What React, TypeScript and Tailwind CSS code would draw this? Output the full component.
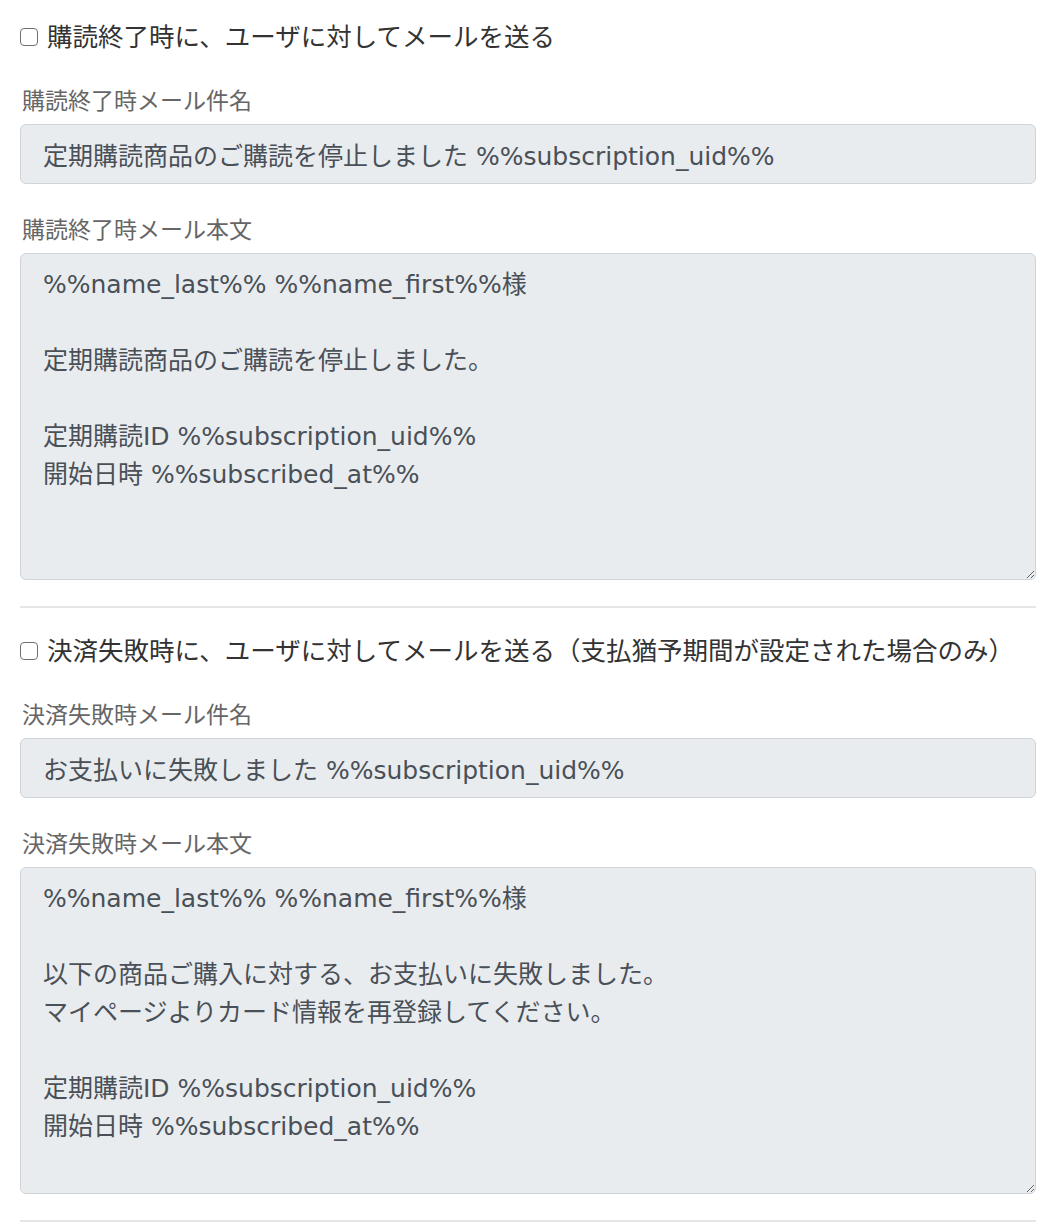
import React from 'react';

const font = "font-['DejaVu_Sans','Noto_Sans_CJK_JP',sans-serif]";

function Check({ label }: { label: string }) {
  return (
    <label className="flex items-center gap-[9px] h-[36px] text-[25.5px] text-[#333] leading-[36px] font-['Liberation_Sans','Noto_Sans_CJK_JP',sans-serif]">
      <span className="block w-[18px] h-[18px] border-[1.5px] border-[#707070] rounded-[4px] bg-white shrink-0" />
      <span>{label}</span>
    </label>
  );
}

function FieldLabel({ children }: { children: React.ReactNode }) {
  return (
    <div className="pl-[2px] text-[23px] leading-[32px] text-[#666] font-['Liberation_Sans','Noto_Sans_CJK_JP',sans-serif]">
      {children}
    </div>
  );
}

function Section({
  check,
  subjectLabel,
  subject,
  bodyLabel,
  body,
}: {
  check: string;
  subjectLabel: string;
  subject: string;
  bodyLabel: string;
  body: string;
}) {
  return (
    <div className="flex flex-col">
      <Check label={check} />
      <div className="mt-[30px]">
        <FieldLabel>{subjectLabel}</FieldLabel>
      </div>
      <input
        readOnly
        value={subject}
        className="mt-[7px] h-[60px] w-full rounded-[6px] border border-[#ced4da] bg-[#e9ecef] px-[22px] text-[25px] text-[#495057] outline-none"
      />
      <div className="mt-[30px]">
        <FieldLabel>{bodyLabel}</FieldLabel>
      </div>
      <textarea
        readOnly
        value={body}
        className="mt-[7px] h-[327px] w-full rounded-[6px] border border-[#ced4da] bg-[#e9ecef] px-[22px] py-[12px] text-[25px] leading-[38px] text-[#495057] outline-none resize-y"
      />
      <div className="mt-[26px] h-[2px] bg-[#e6e6e6]" />
    </div>
  );
}

export default function App() {
  return (
    <div className={`${font} bg-white w-[1054px] min-h-[1224px] pl-[20px] pr-[18px] pt-[19px]`}>
      <div className="flex flex-col gap-[25px]">
        <Section
          check="購読終了時に、ユーザに対してメールを送る"
          subjectLabel="購読終了時メール件名"
          subject="定期購読商品のご購読を停止しました %%subscription_uid%%"
          bodyLabel="購読終了時メール本文"
          body={'%%name_last%% %%name_first%%様\n\n定期購読商品のご購読を停止しました。\n\n定期購読ID %%subscription_uid%%\n開始日時 %%subscribed_at%%'}
        />
        <Section
          check="決済失敗時に、ユーザに対してメールを送る（支払猶予期間が設定された場合のみ）"
          subjectLabel="決済失敗時メール件名"
          subject="お支払いに失敗しました %%subscription_uid%%"
          bodyLabel="決済失敗時メール本文"
          body={'%%name_last%% %%name_first%%様\n\n以下の商品ご購入に対する、お支払いに失敗しました。\nマイページよりカード情報を再登録してください。\n\n定期購読ID %%subscription_uid%%\n開始日時 %%subscribed_at%%'}
        />
      </div>
    </div>
  );
}
